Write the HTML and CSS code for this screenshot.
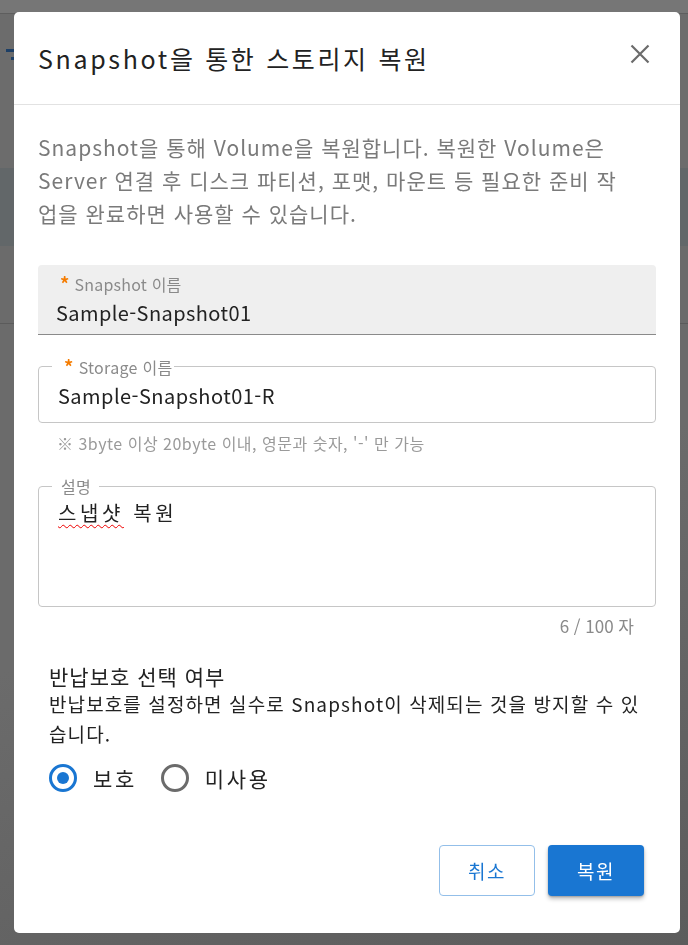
FILE: index.html
```html
<!DOCTYPE html>
<html lang="ko">
<head>
<meta charset="utf-8">
<title>Snapshot을 통한 스토리지 복원</title>
<link rel="stylesheet" href="styles.css">
</head>
<body>
<div class="page">
  <div class="topbar"></div>
  <div class="nav"><span class="glyph"><i class="g1"></i><i class="g2"></i></span></div>
  <div class="band"></div>
  <div class="sub"></div>
  <div class="rest"></div>
</div>

<div class="dialog" role="dialog" aria-labelledby="dlg-title">
  <header class="dlg-header">
    <h2 id="dlg-title" class="dlg-title">Snapshot을 통한 스토리지 복원</h2>
    <button class="close" aria-label="닫기">
      <svg width="20" height="20" viewBox="0 0 20 20"><path d="M1.5 1.5 L18.5 18.5 M18.5 1.5 L1.5 18.5" stroke="#6b6b6b" stroke-width="2.2" fill="none"/></svg>
    </button>
  </header>

  <div class="dlg-body">
    <p class="desc">Snapshot을 통해 Volume을 복원합니다. 복원한 Volume은<br>Server 연결 후 디스크 파티션, 포맷, 마운트 등 필요한 준비 작<br>업을 완료하면 사용할 수 있습니다.</p>

    <div class="filled">
      <div class="filled-label"><span class="req">*</span>Snapshot 이름</div>
      <div class="filled-value">Sample-Snapshot01</div>
    </div>

    <fieldset class="outlined storage">
      <legend><span class="req">*</span>Storage 이름</legend>
      <div class="value">Sample-Snapshot01-R</div>
    </fieldset>
    <div class="helper">※ 3byte 이상 20byte 이내, 영문과 숫자, '-' 만 가능</div>

    <fieldset class="outlined memo">
      <legend class="plain">설명</legend>
      <div class="value memo-value"><span class="spell">스냅샷</span> 복원</div>
    </fieldset>
    <div class="counter">6 / 100 자</div>

    <section class="protect">
      <h3 class="protect-title">반납보호 선택 여부</h3>
      <p class="protect-desc">반납보호를 설정하면 실수로 Snapshot이 삭제되는 것을 방지할 수 있<br>습니다.</p>
      <div class="radios">
        <label class="radio checked"><span class="dot"></span>보호</label>
        <label class="radio"><span class="dot"></span>미사용</label>
      </div>
    </section>
  </div>

  <footer class="dlg-footer">
    <button class="btn btn-outline">취소</button>
    <button class="btn btn-primary">복원</button>
  </footer>
</div>
</body>
</html>
```

FILE: styles.css
```css
* { box-sizing: border-box; }
html, body { margin: 0; padding: 0; }
body {
  width: 688px;
  height: 945px;
  overflow: hidden;
  background: #6b6b6b;
  font-family: "Noto Sans CJK KR", "Noto Sans", sans-serif;
}

/* backdrop page */
.page { display: flex; flex-direction: column; height: 945px; }
.topbar { height: 14px; background: #767676; border-bottom: 1px solid #5e5e5e; }
.nav { height: 154px; background: #6c6c6c; padding: 35px 0 0 6px; }
.glyph { display: flex; flex-direction: column; gap: 5px; align-items: flex-end; width: 10px; }
.glyph i { display: block; height: 3px; background: #1d3f66; }
.glyph .g1 { width: 10px; }
.glyph .g2 { width: 5px; }
.band { height: 78px; background: #626769; }
.sub { height: 78px; background: #6b6b6b; border-bottom: 1px solid #5b5b5b; }
.rest { flex: 1; background: linear-gradient(160deg, #6b6b6b 40%, #5c5c5c 100%); }

/* dialog */
.dialog {
  position: fixed;
  left: 14px;
  top: 12px;
  width: 666px;
  height: 921px;
  background: #fff;
  border-radius: 5px;
  display: flex;
  flex-direction: column;
  color: #222;
}
.dlg-header {
  height: 93px;
  flex: none;
  border-bottom: 1px solid #e2e2e2;
  display: flex;
  align-items: center;
  justify-content: space-between;
  padding: 0 30px 0 24px;
}
.dlg-title {
  margin: 0;
  font-size: 25px;
  letter-spacing: 2.65px;
  font-weight: 400;
  color: #222;
  line-height: 32px;
  padding-bottom: 1px;
}
.close {
  border: 0;
  background: none;
  padding: 0;
  width: 20px;
  height: 20px;
  display: flex;
  margin-top: -8px;
}

.dlg-body {
  flex: 1;
  padding: 0 24px;
}
.desc {
  margin: 26px 0 0;
  font-size: 21px;
  letter-spacing: 1px;
  line-height: 33px;
  color: #7a7a7a;
}

.req {
  color: #f57c00;
  margin-right: 5px;
  font-size: 1.15em;
  font-weight: 700;
}

.filled {
  margin-top: 35px;
  height: 70px;
  background: #efefef;
  border-radius: 4px 4px 0 0;
  border-bottom: 1px solid #8a8a8a;
  padding: 8px 0 0 18px;
}
.filled-label {
  font-size: 16px;
  letter-spacing: 0.2px;
  line-height: 20px;
  color: #8a8a8a;
  padding-left: 4px;
}
.filled-value {
  margin-top: 5px;
  font-size: 20px;
  letter-spacing: 0.4px;
  line-height: 28px;
  color: #222;
}

.outlined {
  margin: 0;
  border: 1px solid #c6c6c6;
  border-radius: 4px;
  padding: 0 0 0 19px;
  min-width: 0;
}
.outlined legend {
  margin-left: -6px;
  padding: 0 1px 0 12px;
  font-size: 16px;
  letter-spacing: 0.3px;
  line-height: 20px;
  color: #8a8a8a;
}
.outlined legend.plain { padding: 0 8px 0 9px; }
.outlined .value {
  font-size: 20px;
  letter-spacing: 0.45px;
  line-height: 28px;
  color: #222;
}
.storage { margin-top: 21px; height: 67px; }
.storage .value { margin-top: 5px; }

.helper {
  margin-top: 10px;
  padding-left: 19px;
  font-size: 16px;
  letter-spacing: 0.5px;
  line-height: 20px;
  color: #9a9a9a;
}

.memo { margin-top: 23px; height: 131px; }
.memo .value { margin-top: 3px; }
.outlined .memo-value { letter-spacing: 3.6px; }
.spell {
  text-decoration: underline wavy #e00;
  text-decoration-skip-ink: none;
  text-decoration-thickness: 1px;
  text-underline-offset: 3px;
}

.counter {
  margin-top: 8px;
  text-align: right;
  padding-right: 22px;
  font-size: 17px;
  line-height: 22px;
  color: #8a8a8a;
}

.protect { padding-left: 11px; margin-top: 26px; }
.protect-title {
  margin: 0;
  font-size: 21px;
  letter-spacing: 1px;
  font-weight: 400;
  line-height: 26px;
  color: #222;
}
.protect-desc {
  margin: 0;
  font-size: 19px;
  letter-spacing: 1.1px;
  line-height: 30px;
  color: #222;
}
.radios {
  margin-top: 15px;
  display: flex;
  align-items: center;
  gap: 24px;
}
.radio {
  display: flex;
  align-items: center;
  gap: 16px;
  font-size: 21px;
  letter-spacing: 2.6px;
  line-height: 28px;
  color: #222;
}
.dot {
  width: 28px;
  height: 28px;
  border-radius: 50%;
  border: 3px solid #6b6b6b;
  display: flex;
  align-items: center;
  justify-content: center;
}
.radio.checked .dot { border-color: #1976d2; }
.radio.checked .dot::after {
  content: "";
  width: 12px;
  height: 12px;
  border-radius: 50%;
  background: #1976d2;
}

.dlg-footer {
  flex: none;
  display: flex;
  justify-content: flex-end;
  gap: 13px;
  padding: 0 36px 37px 0;
}
.btn {
  width: 96px;
  height: 51px;
  border-radius: 4px;
  font-family: inherit;
  font-size: 19px;
  letter-spacing: 1.5px;
  cursor: pointer;
}
.btn-outline {
  background: #fff;
  border: 1px solid #93bfe9;
  color: #1976d2;
}
.btn-primary {
  background: #1976d2;
  border: 0;
  color: #fff;
  box-shadow: 0 3px 4px rgba(0,0,0,0.25), 0 1px 2px rgba(0,0,0,0.2);
}
```
